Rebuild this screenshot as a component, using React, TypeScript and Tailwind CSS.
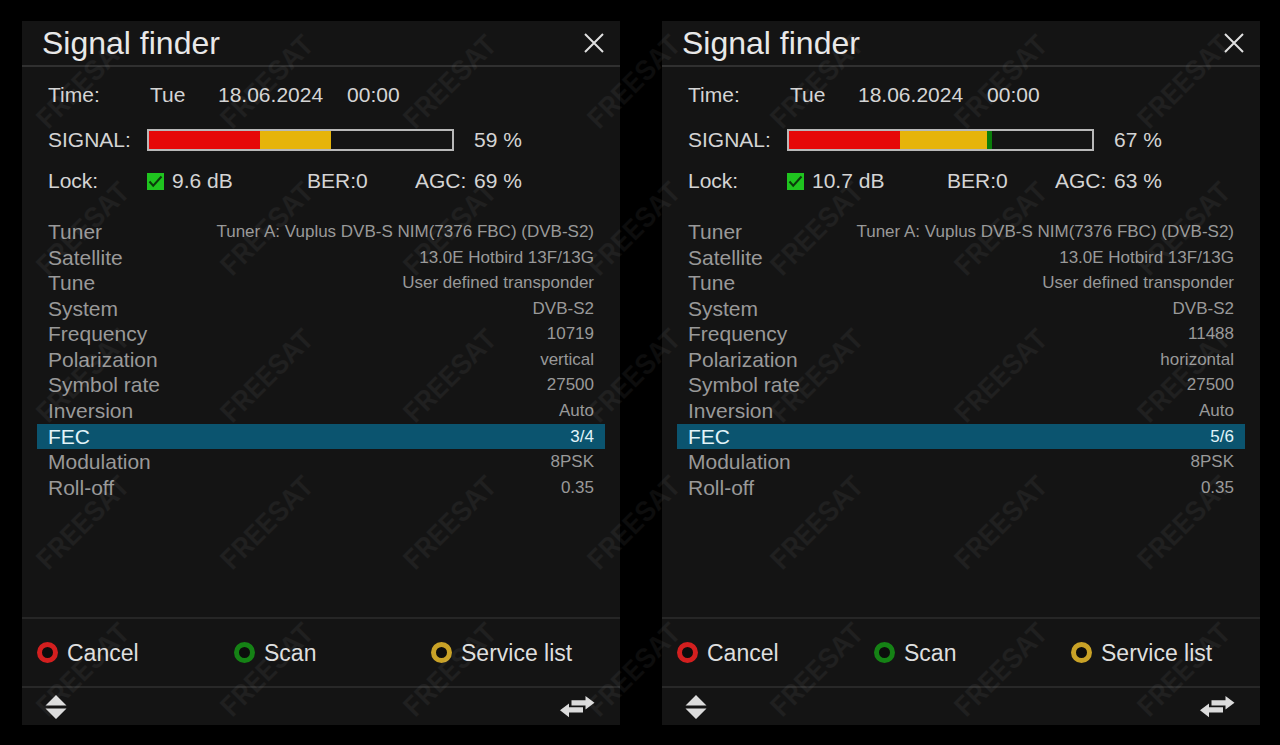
import React, { useState } from "react";

interface TunerParam {
  label: string;
  value: string;
}

interface FinderData {
  id: string;
  day: string;
  date: string;
  time: string;
  signal: number;
  level: number;
  snr: string;
  ber: string;
  agc: string;
  params: TunerParam[];
}

const YELLOW_FROM = 36.5;
const GREEN_FROM = 65.5;

const finders: FinderData[] = [
  {
    id: "left",
    day: "Tue",
    date: "18.06.2024",
    time: "00:00",
    signal: 59,
    level: 60,
    snr: "9.6 dB",
    ber: "0",
    agc: "69 %",
    params: [
      { label: "Tuner", value: "Tuner A: Vuplus DVB-S NIM(7376 FBC) (DVB-S2)" },
      { label: "Satellite", value: "13.0E Hotbird 13F/13G" },
      { label: "Tune", value: "User defined transponder" },
      { label: "System", value: "DVB-S2" },
      { label: "Frequency", value: "10719" },
      { label: "Polarization", value: "vertical" },
      { label: "Symbol rate", value: "27500" },
      { label: "Inversion", value: "Auto" },
      { label: "FEC", value: "3/4" },
      { label: "Modulation", value: "8PSK" },
      { label: "Roll-off", value: "0.35" },
    ],
  },
  {
    id: "right",
    day: "Tue",
    date: "18.06.2024",
    time: "00:00",
    signal: 67,
    level: 67,
    snr: "10.7 dB",
    ber: "0",
    agc: "63 %",
    params: [
      { label: "Tuner", value: "Tuner A: Vuplus DVB-S NIM(7376 FBC) (DVB-S2)" },
      { label: "Satellite", value: "13.0E Hotbird 13F/13G" },
      { label: "Tune", value: "User defined transponder" },
      { label: "System", value: "DVB-S2" },
      { label: "Frequency", value: "11488" },
      { label: "Polarization", value: "horizontal" },
      { label: "Symbol rate", value: "27500" },
      { label: "Inversion", value: "Auto" },
      { label: "FEC", value: "5/6" },
      { label: "Modulation", value: "8PSK" },
      { label: "Roll-off", value: "0.35" },
    ],
  },
];

const actions = [
  { label: "Cancel", ring: "border-[#d31f1f]" },
  { label: "Scan", ring: "border-[#158215]" },
  { label: "Service list", ring: "border-[#c9a227]" },
];

const SignalBar: React.FC<{ level: number; signal: number }> = ({ level, signal }) => {
  const red = Math.min(level, YELLOW_FROM);
  const yellow = Math.max(0, Math.min(level, GREEN_FROM) - YELLOW_FROM);
  const green = Math.max(0, level - GREEN_FROM);

  return (
    <div
      role="meter"
      aria-label="Signal"
      aria-valuenow={signal}
      aria-valuemin={0}
      aria-valuemax={100}
      className="flex h-[22px] flex-1 border-2 border-[#b8b8b8]"
    >
      <div className="bg-[#e60808]" style={{ width: `${red}%` }} />
      <div className="bg-[#e6b40a]" style={{ width: `${yellow}%` }} />
      <div className="bg-[#0a7d0a]" style={{ width: `${green}%` }} />
    </div>
  );
};

const FinderPanel: React.FC<{ data: FinderData }> = ({ data }) => {
  const [selected, setSelected] = useState("FEC");
  const lockId = `lock-${data.id}`;

  return (
    <section className="flex flex-1 flex-col bg-[#141414]">
      <header className="flex h-[46px] items-center justify-between border-b-2 border-[#303030] pl-5 pr-4">
        <h1 className="text-[32px] leading-9 text-[#e8e8e8]">Signal finder</h1>
        <button type="button" aria-label="Close" className="text-[#e0e0e0]">
          <svg width="20" height="20" viewBox="0 0 20 20" fill="none" stroke="currentColor" strokeWidth="2">
            <path d="M1 1L19 19M19 1L1 19" />
          </svg>
        </button>
      </header>

      <div className="flex flex-1 flex-col px-[15px] pt-4">
        <div className="px-[11px] text-[21px] leading-6 text-[#d4d4d4]">
          <div className="flex items-center">
            <span className="w-[99px]">Time:</span>
            <span className="w-[71px] pl-[3px]">{data.day}</span>
            <span>{data.date}</span>
            <span className="pl-6">{data.time}</span>
          </div>

          <div className="mt-[21px] flex items-center">
            <span className="w-[99px]">SIGNAL:</span>
            <SignalBar level={data.level} signal={data.signal} />
            <span className="ml-5 w-[120px]">{data.signal} %</span>
          </div>

          <div className="mt-[17px] flex items-center">
            <label htmlFor={lockId} className="w-[99px]">Lock:</label>
            <span className="flex flex-1 items-center gap-2">
              <span className="grid">
                <input
                  id={lockId}
                  type="checkbox"
                  defaultChecked
                  className="col-start-1 row-start-1 size-[17px] appearance-none bg-[#1fc41f]"
                />
                <svg
                  className="pointer-events-none col-start-1 row-start-1"
                  width="17"
                  height="17"
                  viewBox="0 0 17 17"
                  fill="none"
                  stroke="#0c3a0c"
                  strokeWidth="2"
                >
                  <path d="M2.5 8.5L6.2 12.7L14.5 3.5" />
                </svg>
              </span>
              {data.snr}
            </span>
            <span className="w-[108px]">BER:{data.ber}</span>
            <span className="w-[59px]">AGC:</span>
            <span className="w-[120px]">{data.agc}</span>
          </div>
        </div>

        <table className="mt-[26px] h-[282px] w-full border-separate border-spacing-x-0 border-spacing-y-px">
          <tbody>
            {data.params.map((param) => (
              <tr
                key={param.label}
                onClick={() => setSelected(param.label)}
                className={
                  selected === param.label ? "bg-[#0b546f] text-[#e2f4fa]" : "text-[#999999]"
                }
              >
                <th scope="row" className="p-0 pl-[11px] text-left text-[21px] leading-6 font-normal">
                  {param.label}
                </th>
                <td className="p-0 pr-[11px] text-right text-[17px] leading-6">{param.value}</td>
              </tr>
            ))}
          </tbody>
        </table>
      </div>

      <footer>
        <div className="grid h-[69px] grid-cols-[1fr_1fr_171px] items-center border-t-2 border-[#262626] pl-[15px] pr-[18px]">
          {actions.map((action) => (
            <button
              key={action.label}
              type="button"
              className="flex items-center gap-[9px] text-left text-[23px] leading-7 text-[#dedede]"
            >
              <span className={`size-[21px] rounded-full border-5 bg-[#0c0c0c] ${action.ring}`} />
              {action.label}
            </button>
          ))}
        </div>

        <div className="flex h-[39px] items-center justify-between border-t-2 border-[#282828] pl-[23px] pr-[25px] text-[#dcdcdc]">
          <button type="button" aria-label="Up or down">
            <svg width="22" height="24" viewBox="0 0 22 24" fill="currentColor">
              <path d="M11 0L21.5 10.5H0.5ZM0.5 13.5H21.5L11 24Z" />
            </svg>
          </button>
          <button type="button" aria-label="Left or right">
            <svg width="35" height="22" viewBox="0 0 35 22" fill="currentColor">
              <path d="M11.5 4.2H25.5V0L34.5 6.8L25.5 13.5V9.6H11.5Z" />
              <path d="M0 14.2L9 7.4V11.2H23V16.6H9V21.2Z" />
            </svg>
          </button>
        </div>
      </footer>
    </section>
  );
};

const Watermark: React.FC = () => (
  <div
    aria-hidden="true"
    className="pointer-events-none absolute top-2 -left-2 right-1 grid select-none grid-cols-7 font-['Inter',sans-serif] text-[27px] leading-none font-semibold text-white/5"
  >
    {Array.from({ length: 35 }, (_, i) => (
      <span key={i} className="flex h-[147px] items-center justify-center">
        <span className="-rotate-45">FREESAT</span>
      </span>
    ))}
  </div>
);

const App: React.FC = () => {
  return (
    <main className="relative flex min-h-screen gap-[42px] overflow-hidden bg-black pt-[21px] pr-5 pb-5 pl-[22px] font-['Liberation_Sans',Arial,sans-serif]">
      {finders.map((finder) => (
        <FinderPanel key={finder.id} data={finder} />
      ))}
      <Watermark />
    </main>
  );
};

export default App;
